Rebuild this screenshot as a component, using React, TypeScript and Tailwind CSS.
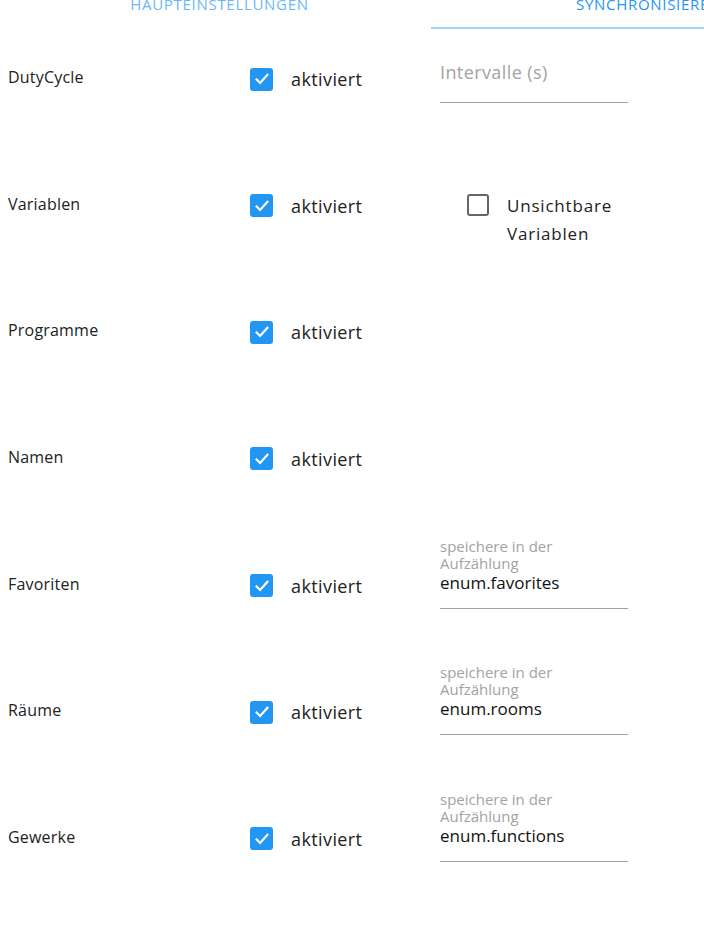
import React from "react";

const font = { fontFamily: '"Open Sans", "Noto Sans", sans-serif' };

type Row = {
  label: string;
  extra?: "interval" | "hidden" | { enumName: string };
};

const rows: Row[] = [
  { label: "DutyCycle", extra: "interval" },
  { label: "Variablen", extra: "hidden" },
  { label: "Programme" },
  { label: "Namen" },
  { label: "Favoriten", extra: { enumName: "enum.favorites" } },
  { label: "Räume", extra: { enumName: "enum.rooms" } },
  { label: "Gewerke", extra: { enumName: "enum.functions" } },
];

function CheckBox({ checked }: { checked: boolean }) {
  if (!checked) {
    return <span className="block h-[22px] w-[22px] shrink-0 rounded-[3px] border-2 border-[#666666] bg-white" />;
  }
  return (
    <span className="flex h-[23px] w-[23px] shrink-0 items-center justify-center rounded-[3px] bg-[#2196f3]">
      <svg viewBox="0 0 24 24" className="h-[20px] w-[20px]" fill="none" stroke="white" strokeWidth="2.6" aria-hidden>
        <path d="M5.5 12.5l4.2 4.2L18.5 7" strokeLinecap="square" />
      </svg>
    </span>
  );
}

function Extra({ extra }: { extra: Row["extra"] }) {
  if (extra === "interval") {
    return (
      <div className="w-[188px] border-b border-[#a0a0a0] pt-[31px] pb-[18px]">
        <div className="text-[18px] leading-6 tracking-[0.4px] text-[#a3a3a3]">Intervalle (s)</div>
      </div>
    );
  }
  if (extra === "hidden") {
    return (
      <div className="flex items-start gap-[18px] pl-[27px] pt-[38px]">
        <CheckBox checked={false} />
        <span className="-mt-[2px] w-[112px] text-[17px] leading-[28px] tracking-[0.8px] text-[#222222]">
          Unsichtbare Variablen
        </span>
      </div>
    );
  }
  if (extra) {
    return (
      <div className="w-[188px] border-b border-[#a0a0a0] pt-[2px] pb-[14px]">
        <div className="w-[130px] text-[15px] leading-[17px] text-[#a3a3a3]">speichere in der Aufzählung</div>
        <div className="text-[17px] leading-[22px] text-[#111111]">{extra.enumName}</div>
      </div>
    );
  }
  return null;
}

export default function App() {
  return (
    <div className="h-[926px] w-[704px] overflow-hidden bg-white" style={font}>
      <div className="-mt-[19px] flex h-[48px] w-[862px]">
        <div className="flex w-[431px] items-center justify-center pb-[2px] pl-[8px] text-[15px] uppercase tracking-[0.7px] text-[#6ab8f7]">
          Haupteinstellungen
        </div>
        <div className="flex w-[431px] items-center justify-center border-b-2 border-[#a3d5f9] pl-[4px] text-[15px] uppercase tracking-[0.7px] text-[#2196f3]">
          Synchronisieren
        </div>
      </div>
      {rows.map((row) => (
        <div key={row.label} className="flex h-[126.67px] items-start">
          <div className="w-[250px] pl-2 pt-[38px] text-[16px] leading-5 tracking-[0.2px] text-[#222222]">{row.label}</div>
          <div className="flex w-[190px] items-center gap-[18px] pt-[38px]">
            <CheckBox checked />
            <span className="text-[18px] leading-6 tracking-[0.4px] text-[#222222]">aktiviert</span>
          </div>
          <Extra extra={row.extra} />
        </div>
      ))}
    </div>
  );
}
